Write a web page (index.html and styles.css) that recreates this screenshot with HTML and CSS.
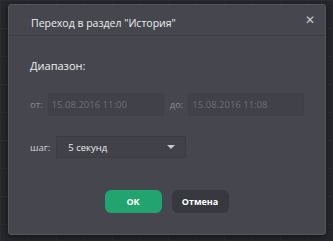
FILE: index.html
```html
<!DOCTYPE html>
<html lang="ru">
<head>
  <meta charset="UTF-8">
  <title>Переход в раздел "История"</title>
  <link rel="stylesheet" href="styles.css">
</head>
<body>
  <div class="dialog">
    <div class="dialog-header">
      <h3>Переход в раздел "История"</h3>
      <span class="close">&#x2715;</span>
    </div>
    <div class="dialog-body">
      <div class="section-title">Диапазон:</div>
      <div class="range-row">
        <label>от:</label>
        <input type="text" value="15.08.2016 11:00" disabled>
        <label class="to">до:</label>
        <input type="text" value="15.08.2016 11:08" disabled>
      </div>
      <div class="step-row">
        <label>шаг:</label>
        <div class="select">
          <span>5 секунд</span>
          <span class="caret"></span>
        </div>
      </div>
      <div class="buttons">
        <button class="btn ok">OK</button>
        <button class="btn cancel">Отмена</button>
      </div>
    </div>
  </div>
</body>
</html>
```
FILE: styles.css
```css
*{box-sizing:border-box;margin:0;padding:0;font-family:"Open Sans","DejaVu Sans",sans-serif}
body{background:#26272c;background-image:linear-gradient(#2d2e33 1px,transparent 1px),linear-gradient(90deg,#2d2e33 1px,transparent 1px);background-size:28px 28px;width:333px;height:241px;padding:4px 7px 6px 8px;overflow:hidden}
.dialog{background:#46474e;border:1px solid #55565d;border-radius:3px;height:231px;box-shadow:0 2px 6px rgba(0,0,0,0.5)}
.dialog-header{display:flex;justify-content:space-between;align-items:center;height:31px;padding:6px 10px 0 22px;border-bottom:1px solid #3d3e44}
.dialog-header h3{font-size:10.5px;font-weight:normal;color:#eeeeee}
.close{color:#c8c8cc;font-size:12px;font-weight:bold;margin-top:-7px}
.dialog-body{padding:22px 22px 0 21px}
.section-title{font-size:11px;color:#f0f0f0;height:16px}
.range-row{display:flex;align-items:center;margin-top:19px}
.range-row label,.step-row label{font-size:9.5px;color:#8a8b90;margin-right:5px}
.range-row label.to{margin-left:6px}
.range-row input{width:116px;height:23px;background:#414249;border:1px solid #3f4046;color:#6d6e73;font-size:9.5px;padding-left:3px}
.step-row{display:flex;align-items:center;margin-top:20px}
.step-row label{color:#d6d6d8;margin-right:6px}
.select{display:flex;justify-content:space-between;align-items:center;width:130px;height:22px;background:#414249;border:1px solid #3c3d43;padding:0 10px 0 11px;font-size:9.5px;color:#ececec}
.caret{width:0;height:0;border-left:4px solid transparent;border-right:4px solid transparent;border-top:4px solid #c8c8cc}
.buttons{display:flex;justify-content:center;gap:10px;margin-top:32px}
.btn{height:23px;width:57px;border:none;border-radius:6px;font-size:9px;font-weight:bold;color:#fff}
.ok{background:#21a46d}
.cancel{background:#38393e;font-weight:bold}
```
